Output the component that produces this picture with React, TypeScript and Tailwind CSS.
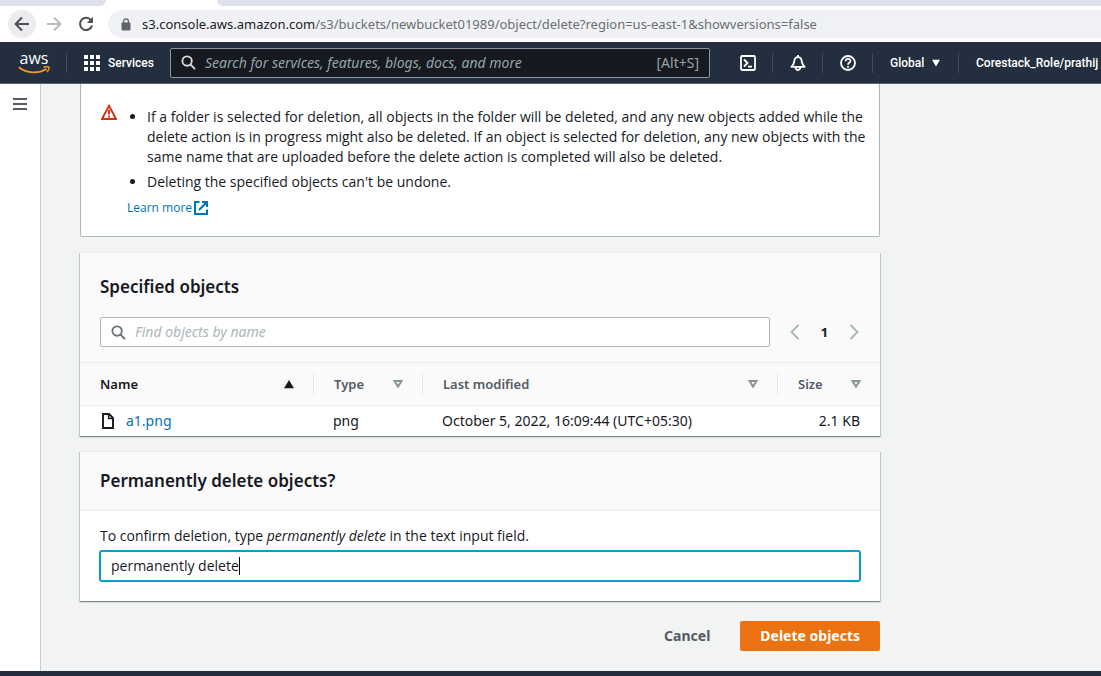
import { useState, type ReactNode } from "react";

function Divider() {
  return <span className="h-5 w-px shrink-0 bg-[#414d5c]" />;
}

function SearchIcon({ className }: { className: string }) {
  return (
    <svg viewBox="0 0 16 16" className={className} fill="none" stroke="currentColor" strokeWidth="2" aria-hidden="true">
      <circle cx="6.5" cy="6.5" r="5" />
      <path d="M10.2 10.2 15 15" />
    </svg>
  );
}

function SortIcon({ active = false }: { active?: boolean }) {
  return active ? (
    <svg viewBox="0 0 12 10" className="h-[10px] w-3 shrink-0" aria-hidden="true">
      <path d="M6 0.9 11 9.2H1Z" fill="#16191f" />
    </svg>
  ) : (
    <svg viewBox="0 0 12 10" className="h-[10px] w-3 shrink-0" aria-hidden="true">
      <path d="M2.5 2H9.5L6 7.6Z" fill="none" stroke="#879596" strokeWidth="2" />
    </svg>
  );
}

function BrowserBar() {
  return (
    <div className="shrink-0 bg-white">
      <div className="flex h-[6px] bg-white">
        <span className="w-[106px] rounded-br-[6px] bg-[#dee0ea]" />
        <span className="w-[111px]" />
        <span className="flex-1 rounded-bl-[6px] bg-[#dee0ea]" />
      </div>
      <div className="flex h-9 items-center pl-2">
        <button aria-label="Back" className="flex size-7 items-center justify-center rounded-full bg-[#ececef] text-[#4d5156]">
          <svg viewBox="0 0 16 16" className="size-4" fill="none" stroke="currentColor" strokeWidth="2">
            <path d="M15 8H2M8 1.5 1.6 8 8 14.5" />
          </svg>
        </button>
        <button aria-label="Forward" className="ml-1 flex size-7 items-center justify-center text-[#b9bbbe]">
          <svg viewBox="0 0 16 16" className="size-4" fill="none" stroke="currentColor" strokeWidth="2">
            <path d="M1 8h13M8 1.5 14.4 8 8 14.5" />
          </svg>
        </button>
        <button aria-label="Reload" className="ml-1 flex size-7 items-center justify-center text-[#4d5156]">
          <svg viewBox="0 0 16 16" className="size-4" fill="none">
            <path d="M13 4.2A6.1 6.1 0 1 0 14 9.6" stroke="currentColor" strokeWidth="2" />
            <path d="M15 0.8V7H8.8Z" fill="currentColor" />
          </svg>
        </button>
        <div className="ml-2 flex h-7 min-w-0 flex-1 items-center rounded-l-full bg-[#f0f1f4] pl-[13px]">
          <svg viewBox="0 0 10 13" className="h-[13px] w-[10px] shrink-0" aria-hidden="true">
            <rect x="0.5" y="4.5" width="9" height="8" rx="1" fill="#5f6368" />
            <path d="M2.6 5V3.2a2.4 2.4 0 0 1 4.8 0V5" fill="none" stroke="#5f6368" strokeWidth="1.3" />
          </svg>
          <div className="ml-[11px] text-[13px] whitespace-nowrap text-[#6b6f75]">
            <span className="text-[#202124]">s3.console.aws.amazon.com</span>
            /s3/buckets/newbucket01989/object/delete?region=us-east-1&amp;showversions=false
          </div>
        </div>
      </div>
    </div>
  );
}

function NavIcon({ label, children }: { label: string; children: ReactNode }) {
  return (
    <button aria-label={label} className="flex w-[49px] shrink-0 items-center justify-center">
      <svg viewBox="0 0 16 16" className="size-4" fill="none" stroke="#fff" strokeWidth="1.8">
        {children}
      </svg>
    </button>
  );
}

function TopNav() {
  return (
    <nav className="flex h-[42px] shrink-0 items-center overflow-hidden border-b border-[#56606c] bg-[#232f3e] font-['Roboto',sans-serif] text-xs font-medium text-white">
      <a href="#" aria-label="AWS home" className="ml-[18px] flex w-8 shrink-0 flex-col items-center">
        <span className="h-[14px] font-['Open_Sans',sans-serif] text-base leading-[12px]">aws</span>
        <svg viewBox="0 0 32 8" className="h-2 w-8" fill="none" stroke="#f79b1d" aria-hidden="true">
          <path d="M0.8 1.2C9 7.6 20 8 28.6 3" strokeWidth="1.9" />
          <path d="M25.4 1.3C27.8 0.5 30 0.4 30.8 1.1C31.3 2 30.6 4.2 29 6" strokeWidth="1.4" />
        </svg>
      </a>
      <span className="ml-4 flex"><Divider /></span>
      <button className="ml-[17px] flex w-[70px] shrink-0 items-center gap-2">
        <svg viewBox="0 0 16 16" className="size-4 shrink-0" fill="#fff" aria-hidden="true">
          {[0, 6, 12].map((y) => [0, 6, 12].map((x) => <rect key={`${x}-${y}`} x={x} y={y} width="4" height="4" />))}
        </svg>
        Services
      </button>
      <label className="ml-4 flex h-[30px] w-[540px] items-center rounded-xs border border-[#8b959f] bg-[#16191f] px-[10px]">
        <SearchIcon className="size-[15px] shrink-0 text-[#d5dbdb]" />
        <input
          aria-label="Search services"
          placeholder="Search for services, features, blogs, docs, and more"
          className="ml-[9px] min-w-0 flex-1 bg-transparent font-['Noto_Sans',sans-serif] text-sm font-normal outline-none placeholder:text-[#95a5a6] placeholder:italic"
        />
        <span className="font-['Noto_Sans',sans-serif] text-sm font-normal text-[#95a5a6]">[Alt+S]</span>
      </label>
      <span className="w-[13px] shrink-0" />
      <NavIcon label="CloudShell">
        <rect x="1" y="1" width="14" height="14" rx="1.2" />
        <path d="M4 4.5 7.5 8 4 11.5M8 11.6h4" />
      </NavIcon>
      <Divider />
      <NavIcon label="Notifications">
        <path d="M8 0v2M1.4 11.8C4 9.4 3.9 8.6 4.2 6.4C4.6 3.6 5.8 2.2 8 2.2S11.4 3.6 11.8 6.4C12.1 8.6 12 9.4 14.6 11.8Z" strokeLinejoin="round" />
        <path d="M5.6 12C5.6 16 10.4 16 10.4 12" />
      </NavIcon>
      <Divider />
      <NavIcon label="Help">
        <circle cx="8" cy="8" r="7" />
        <path d="M5.6 6.3C5.6 3 10.5 3.2 10.4 6C10.4 7.8 8 7.7 8 9.8M8 10.9v1.8" />
      </NavIcon>
      <Divider />
      <button className="ml-[17px] flex w-[50px] shrink-0 items-center justify-between">
        Global
        <svg viewBox="0 0 8 8" className="size-2" fill="#fff" aria-hidden="true"><path d="M0 0.8H8L4 7.6Z" /></svg>
      </button>
      <span className="ml-[18px] flex"><Divider /></span>
      <button className="ml-[17px] shrink-0 whitespace-nowrap">Corestack_Role/prathij</button>
    </nav>
  );
}

function WarningCard() {
  return (
    <section className="flex gap-[10px] rounded-b-xs border border-t-0 border-[#aab7b8] bg-white pt-5 pr-3 pb-[18px] pl-5">
      <svg viewBox="0 0 16 16" className="size-4 shrink-0" aria-label="Warning">
        <path d="M8 1.8 15 15H1Z" fill="none" stroke="#d13212" strokeWidth="1.9" />
        <path d="M8 6v4.6M8 11.6v1.8" stroke="#d13212" strokeWidth="1.9" />
      </svg>
      <div className="min-w-0 flex-1 font-['Open_Sans',sans-serif]">
        <ul className="flex list-disc flex-col gap-[5px] pt-[3px] pl-5">
          <li>
            If a folder is selected for deletion, all objects in the folder will be deleted, and any new objects added while the
            delete action is in progress might also be deleted. If an object is selected for deletion, any new objects with the
            same name that are uploaded before the delete action is completed will also be deleted.
          </li>
          <li>Deleting the specified objects can't be undone.</li>
        </ul>
        <a href="#" className="mt-[6px] flex items-center gap-[2px] text-xs leading-5 text-[#0073bb]">
          Learn more
          <svg viewBox="0 0 14 14" className="size-[14px]" fill="none" stroke="currentColor" strokeWidth="2" aria-hidden="true">
            <path d="M5.5 1H1v12h12V8.5M8 1h5v5M12.5 1.5 5 9" />
          </svg>
        </a>
      </div>
    </section>
  );
}

const cardShadow = "border-t border-[#eaeded] shadow-[0_1px_1px_0_rgba(0,28,36,0.3),1px_1px_1px_0_rgba(0,28,36,0.15),-1px_1px_1px_0_rgba(0,28,36,0.15)]";

function Column({ label, active = false, last = false }: { label: string; active?: boolean; last?: boolean }) {
  return (
    <th scope="col" className="border-y border-[#eaeded] p-0 text-left text-[13px] font-semibold">
      <div className={`flex h-5 items-center justify-between pr-[18px] pl-5 ${last ? "" : "border-r border-[#e1e5e6]"} ${active ? "text-[#16191f]" : "text-[#545b64]"}`}>
        {label}
        <SortIcon active={active} />
      </div>
    </th>
  );
}

function ObjectsCard() {
  return (
    <section className={`bg-[#fafafa] ${cardShadow}`}>
      <h2 className="px-5 pt-6 text-[17px] leading-5 font-semibold">Specified objects</h2>
      <div className="flex items-center pt-5 pr-[18px] pb-[15px] pl-5">
        <label className="flex h-[30px] flex-1 items-center rounded-xs border border-[#aab7b8] bg-white px-[10px]">
          <SearchIcon className="size-[15px] text-[#687078]" />
          <input
            aria-label="Find objects by name"
            placeholder="Find objects by name"
            className="ml-[9px] min-w-0 flex-1 outline-none placeholder:text-[#aab7b8] placeholder:italic"
          />
        </label>
        <button aria-label="Previous page" className="ml-[17px] text-[#aab7b8]">
          <svg viewBox="0 0 16 16" className="size-4" fill="none" stroke="currentColor" strokeWidth="1.9"><path d="M11.5 1 4.5 8l7 7" /></svg>
        </button>
        <button className="w-[43px] text-center text-[13px] font-bold">1</button>
        <button aria-label="Next page" className="text-[#aab7b8]">
          <svg viewBox="0 0 16 16" className="size-4" fill="none" stroke="currentColor" strokeWidth="1.9"><path d="m4.5 1 7 7-7 7" /></svg>
        </button>
      </div>
      <table className="w-full table-fixed border-separate border-spacing-0">
        <colgroup>
          <col className="w-[234px]" />
          <col className="w-[109px]" />
          <col />
          <col className="w-[102px]" />
        </colgroup>
        <thead>
          <tr className="h-11">
            <Column label="Name" active />
            <Column label="Type" />
            <Column label="Last modified" />
            <Column label="Size" last />
          </tr>
        </thead>
        <tbody className="bg-white">
          <tr className="h-[30px]">
            <td className="px-5">
              <div className="flex items-center gap-[10px]">
                <svg viewBox="0 0 16 16" className="size-4" fill="none" stroke="#16191f" strokeWidth="1.9" aria-hidden="true">
                  <path d="M3 1h6l4 4v10H3Z" />
                  <path d="M8.6 1v4.6H13" strokeWidth="1.5" />
                </svg>
                <a href="#" className="text-[#0073bb]">a1.png</a>
              </div>
            </td>
            <td className="pr-5 pl-[19px]">png</td>
            <td className="pr-5 pl-[19px]">October 5, 2022, 16:09:44 (UTC+05:30)</td>
            <td className="px-5 text-right">2.1 KB</td>
          </tr>
        </tbody>
      </table>
    </section>
  );
}

function ConfirmCard({ value, onChange }: { value: string; onChange: (value: string) => void }) {
  return (
    <section className={`bg-white ${cardShadow}`}>
      <h2 className="border-b border-[#eaeded] bg-[#fafafa] px-5 py-[19px] text-[17px] leading-5 font-semibold">
        Permanently delete objects?
      </h2>
      <div className="px-5 pt-[15px] pb-5 font-['Open_Sans',sans-serif]">
        <label htmlFor="confirm">
          To confirm deletion, type <em>permanently delete</em> in the text input field.
        </label>
        <label className="mt-[5px] flex h-[30px] cursor-text items-center rounded-xs border border-[#00a1c9] bg-white pl-[10px] ring-1 ring-[#00a1c9]">
          <input
            id="confirm"
            value={value}
            onChange={(event) => onChange(event.target.value)}
            className="field-sizing-content max-w-full caret-transparent outline-none"
          />
          <span className="h-[18px] w-px bg-black" />
        </label>
      </div>
    </section>
  );
}

export default function App() {
  const [value, setValue] = useState("permanently delete");
  return (
    <div className="flex min-h-screen flex-col overflow-hidden bg-[#f2f3f3] font-['Noto_Sans',sans-serif] text-sm leading-5 text-[#16191f]">
      <BrowserBar />
      <TopNav />
      <div className="flex flex-1">
        <aside className="w-[41px] shrink-0 border-r border-[#c8cdce] bg-white pt-3 pl-3">
          <button aria-label="Open navigation" className="flex size-4 items-center justify-center">
            <svg viewBox="0 0 16 16" className="size-4" stroke="#545b64" strokeWidth="2">
              <path d="M1 3h14M1 8h14M1 13h14" />
            </svg>
          </button>
        </aside>
        <main className="min-w-0 flex-1 px-[39px]">
          <div className="flex max-w-[800px] flex-col gap-[15px] pb-5">
            <WarningCard />
            <ObjectsCard />
            <ConfirmCard value={value} onChange={setValue} />
            <div className="flex justify-end gap-[10px] pt-[5px] font-bold">
              <button className="h-[30px] px-5 text-[#545b64]">Cancel</button>
              <button className="h-[30px] rounded-xs bg-[#ec7211] px-5 text-white">Delete objects</button>
            </div>
          </div>
        </main>
      </div>
      <footer className="h-[5px] shrink-0 bg-[#232f3e]" />
    </div>
  );
}
